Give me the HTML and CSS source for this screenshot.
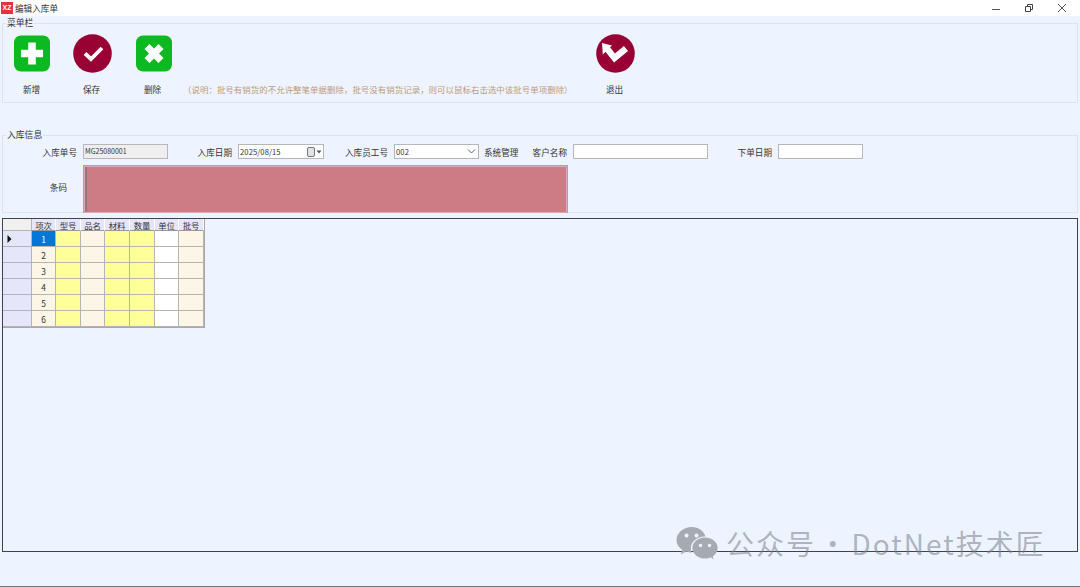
FILE: index.html
```html
<!DOCTYPE html>
<html lang="zh-CN">
<head>
<meta charset="utf-8">
<title>编辑入库单</title>
<link rel="stylesheet" href="styles.css">
</head>
<body>
<div class="app">
  <header class="titlebar">
    <div class="title-left">
      <span class="logo">XZ</span>
      <span class="title-text">编辑入库单</span>
    </div>
    <div class="win-btns">
      <svg class="win-icon" width="10" height="10" viewBox="0 0 10 10"><path d="M1 6.5H9" stroke="#555" fill="none"/></svg>
      <svg class="win-icon" width="10" height="10" viewBox="0 0 10 10"><path d="M1.5 3.5H6.5V8.5H1.5ZM3.5 3.5V1.5H8.5V6.5H6.5" stroke="#444" fill="none"/></svg>
      <svg class="win-icon" width="10" height="10" viewBox="0 0 10 10"><path d="M1 1L9 9M9 1L1 9" stroke="#555" fill="none"/></svg>
    </div>
  </header>

  <main class="content">
    <section class="group menu-group">
      <span class="legend">菜单栏</span>
      <div class="tool">
        <svg class="tool-icon" width="36" height="36" viewBox="0 0 36 36"><rect width="36" height="36" rx="7" fill="#0cb920"/><path d="M14.2 7H21.8V14.2H29V21.8H21.8V29H14.2V21.8H7V14.2H14.2Z" fill="#fff"/></svg>
        <span class="tool-label">新增</span>
      </div>
      <div class="tool">
        <svg class="tool-icon" width="39" height="39" viewBox="0 0 39 39"><circle cx="19.5" cy="19.5" r="19.3" fill="#990033"/><path d="M12 19.5L18 25L29 14" stroke="#fff" stroke-width="3.8" fill="none"/></svg>
        <span class="tool-label">保存</span>
      </div>
      <div class="tool">
        <svg class="tool-icon" width="36" height="36" viewBox="0 0 36 36"><rect width="36" height="36" rx="7" fill="#0cb920"/><path d="M13.5 8.5L18 13L22.5 8.5L27.5 13.5L23 18L27.5 22.5L22.5 27.5L18 23L13.5 27.5L8.5 22.5L13 18L8.5 13.5Z" fill="#fff"/></svg>
        <span class="tool-label">删除</span>
      </div>
      <p class="note">（说明：批号有销货的不允许整笔单据删除，批号没有销货记录，则可以鼠标右击选中该批号单项删除）</p>
      <div class="tool tool-exit">
        <svg class="tool-icon" width="39" height="39" viewBox="0 0 39 39"><circle cx="19.5" cy="19.5" r="19.3" fill="#990033"/><path d="M10.5 14L18.5 24L30 14.5" stroke="#fff" stroke-width="6.4" fill="none"/><path d="M6 9L16 11.5L6.8 20.5Z" fill="#fff"/></svg>
        <span class="tool-label">退出</span>
      </div>
    </section>

    <section class="group info-group">
      <span class="legend">入库信息</span>
      <div class="info-row">
        <label class="lbl">入库单号</label>
        <div class="field field-readonly">MG25080001</div>
        <label class="lbl">入库日期</label>
        <div class="field field-pick">
          <span>2025/08/15</span>
          <span class="pick-btn">
            <svg width="15" height="10" viewBox="0 0 15 10"><rect x="0.5" y="0.5" width="7" height="9" rx="1.5" fill="#dfe3e8" stroke="#777"/><path d="M9.5 3.5H14.5L12 6.5Z" fill="#456"/></svg>
          </span>
        </div>
        <label class="lbl">入库员工号</label>
        <div class="field field-pick">
          <span>002</span>
          <svg class="combo-arrow" width="9" height="5" viewBox="0 0 9 5"><path d="M1 0.5L4.5 4L8 0.5" stroke="#666" fill="none"/></svg>
        </div>
        <span class="lbl-plain">系统管理</span>
        <label class="lbl">客户名称</label>
        <div class="field field-up"></div>
        <label class="lbl">下单日期</label>
        <div class="field field-up"></div>
      </div>
      <div class="barcode-row">
        <label class="lbl lbl-barcode">条码</label>
        <div class="barcode"><div class="barcode-fill"></div></div>
      </div>
    </section>

    <section class="grid-panel">
      <div class="dg">
        <div class="c corner"></div><div class="c ch">项次</div><div class="c ch">型号</div><div class="c ch">品名</div><div class="c ch">材料</div><div class="c ch">数量</div><div class="c ch">单位</div><div class="c ch">批号</div>

        <div class="c rh"><svg width="5" height="8" viewBox="0 0 5 8"><path d="M0.5 0L4.5 4L0.5 8Z" fill="#111"/></svg></div><div class="c sel">1</div><div class="c y"></div><div class="c o"></div><div class="c y"></div><div class="c y"></div><div class="c w"></div><div class="c o"></div>

        <div class="c rh"></div><div class="c o">2</div><div class="c y"></div><div class="c o"></div><div class="c y"></div><div class="c y"></div><div class="c w"></div><div class="c o"></div>

        <div class="c rh"></div><div class="c o">3</div><div class="c y"></div><div class="c o"></div><div class="c y"></div><div class="c y"></div><div class="c w"></div><div class="c o"></div>

        <div class="c rh"></div><div class="c o">4</div><div class="c y"></div><div class="c o"></div><div class="c y"></div><div class="c y"></div><div class="c w"></div><div class="c o"></div>

        <div class="c rh"></div><div class="c o">5</div><div class="c y"></div><div class="c o"></div><div class="c y"></div><div class="c y"></div><div class="c w"></div><div class="c o"></div>

        <div class="c rh"></div><div class="c o">6</div><div class="c y"></div><div class="c o"></div><div class="c y"></div><div class="c y"></div><div class="c w"></div><div class="c o"></div>
      </div>
    </section>
  </main>

  <footer class="bottom-line"></footer>

  <div class="watermark">
    <svg width="42" height="34" viewBox="0 0 42 34"><path d="M16 1C7.5 1 0.5 6.8 0.5 14C0.5 18 2.7 21.4 6.2 23.8L4.8 28.5L10.2 25.6C12 26.3 13.6 26.6 15.6 26.7C15 25.3 14.8 24 14.8 22.6C14.8 15.6 21.5 10.2 29.5 10.6C27.8 5 22.3 1 16 1Z" fill="#a6abb3"/><ellipse cx="29" cy="22" rx="12.6" ry="10.6" fill="#a6abb3"/><path d="M33.5 30L37.5 33.5L36.5 28Z" fill="#a6abb3"/><circle cx="10.5" cy="9.5" r="2" fill="#edf4ff"/><circle cx="20.5" cy="9.5" r="2" fill="#edf4ff"/><circle cx="24.5" cy="19.5" r="1.7" fill="#edf4ff"/><circle cx="33.5" cy="19.5" r="1.7" fill="#edf4ff"/></svg>
    <span class="wm-text">公众号 · DotNet技术匠</span>
  </div>
</div>
</body>
</html>
```

FILE: styles.css
```css
* { box-sizing: border-box; }

html, body {
  margin: 0;
  padding: 0;
  height: 100%;
  overflow: hidden;
}

body {
  background: #edf4ff;
  color: #333;
  font-family: "Noto Sans CJK SC", "Noto Sans", sans-serif;
  font-size: 8.6px;
  line-height: 12px;
}

.app {
  position: relative;
  display: flex;
  flex-direction: column;
  height: 587px;
}

.titlebar {
  display: flex;
  justify-content: space-between;
  align-items: center;
  height: 16px;
  flex: none;
  background: #fff;
}

.title-left {
  display: flex;
  align-items: center;
  gap: 2px;
  padding-left: 1px;
}

.logo {
  display: flex;
  align-items: center;
  justify-content: center;
  width: 12px;
  height: 12px;
  background: #e9303f;
  color: #fff;
  font-family: "Liberation Sans", sans-serif;
  font-size: 7px;
  font-weight: 700;
}

.title-text { color: #333; }

.win-btns {
  display: flex;
  gap: 23px;
  padding-right: 13px;
}

.win-icon { display: block; }

.content {
  flex: 1;
  display: flex;
  flex-direction: column;
  padding: 7px 2px 0;
}

.group {
  position: relative;
  border: 1px solid #dde3ee;
}

.legend {
  position: absolute;
  top: -7px;
  left: 3px;
  padding: 0 1px;
  background: #edf4ff;
  font-size: 8.8px;
}

.menu-group {
  display: flex;
  align-items: flex-start;
  gap: 4px;
  height: 80px;
  padding-top: 10px;
}

.tool {
  display: flex;
  flex-direction: column;
  align-items: center;
  flex: none;
  width: 57px;
}

.tool-icon {
  display: block;
  margin: auto;
}

.tool > .tool-icon { height: 39px; }

.tool-label {
  margin-top: 10px;
  text-align: center;
}

.tool:not(:first-of-type) .tool-label { margin-left: -2px; }

.tool-exit { margin-left: 16px; }

.note {
  margin: 49px 0 0 -3px;
  width: 384px;
  flex: none;
  color: #c29a78;
  font-size: 8.48px;
  white-space: nowrap;
}

.info-group {
  height: 78px;
  margin-top: 32px;
  padding-top: 8px;
}

.info-row {
  display: grid;
  grid-template-columns: 80px 85px 70px 86px 70px 85px 40px 54px 135px 70px 85px;
  align-items: center;
  height: 15px;
}

.lbl {
  padding-right: 6px;
  text-align: right;
  white-space: nowrap;
}

.lbl-plain {
  padding-left: 5px;
  white-space: nowrap;
}

.field {
  height: 15px;
  border: 1px solid #b4b8bd;
  background: #fff;
  padding-left: 1px;
  font-size: 7.6px;
  line-height: 13px;
  letter-spacing: 0.1px;
  white-space: nowrap;
}

.field-readonly {
  background: #efefef;
  font-size: 7px;
  letter-spacing: 0;
}

.field-pick {
  display: flex;
  align-items: center;
  justify-content: space-between;
}

.field-up { margin-top: -1px; }

.pick-btn {
  display: flex;
  padding-right: 1px;
}

.pick-btn svg { display: block; }

.combo-arrow {
  display: block;
  margin-right: 2px;
}

.barcode-row {
  display: flex;
  align-items: center;
  margin-top: 6px;
  height: 48px;
}

.lbl-barcode {
  width: 80px;
  margin-bottom: 4px;
  padding-right: 16px;
}

.barcode {
  width: 485px;
  height: 48px;
  padding: 1px;
  border: 1px solid #6db3ec;
  border-bottom: 0;
  background: #e6a8b0;
}

.barcode-fill {
  height: 100%;
  background: #cd7b85;
  border-left: 2px solid #8f7a80;
}

.grid-panel {
  height: 334px;
  margin-top: 5px;
  border: 1px solid #40434a;
}

.dg {
  display: grid;
  grid-template-columns: 29px 24px 25px 24px 25px 25px 24px 25px;
  grid-template-rows: 12px repeat(6, 16px);
  width: 202px;
  border-right: 1px solid #a8a8a8;
  border-bottom: 1px solid #a8a8a8;
}

.c {
  display: flex;
  align-items: center;
  justify-content: center;
  border-right: 1px solid #b4b4b4;
  border-bottom: 1px solid #b4b4b4;
  color: #333;
  font-size: 8.4px;
  line-height: 12px;
}

.corner { background: #f0f0f0; }

.ch {
  background: #e6e6fa;
  border-right-color: #fff;
  border-bottom-color: #9a9a9a;
}

.rh {
  background: #e6e6fa;
  justify-content: flex-start;
  padding-left: 4px;
}

.y { background: #ffff99; }
.o { background: #fdf5e6; }
.w { background: #fff; }

.sel {
  background: #0078d7;
  color: #fff;
}

.bottom-line {
  flex: none;
  height: 1px;
  background: #6f737a;
}

.watermark {
  position: absolute;
  left: 676px;
  top: 526px;
  display: flex;
  align-items: center;
  gap: 8px;
  pointer-events: none;
}

.wm-text {
  color: rgba(120, 125, 135, 0.55);
  font-size: 28px;
  line-height: 34px;
  letter-spacing: 2px;
  word-spacing: -5.5px;
  white-space: nowrap;
}
```
